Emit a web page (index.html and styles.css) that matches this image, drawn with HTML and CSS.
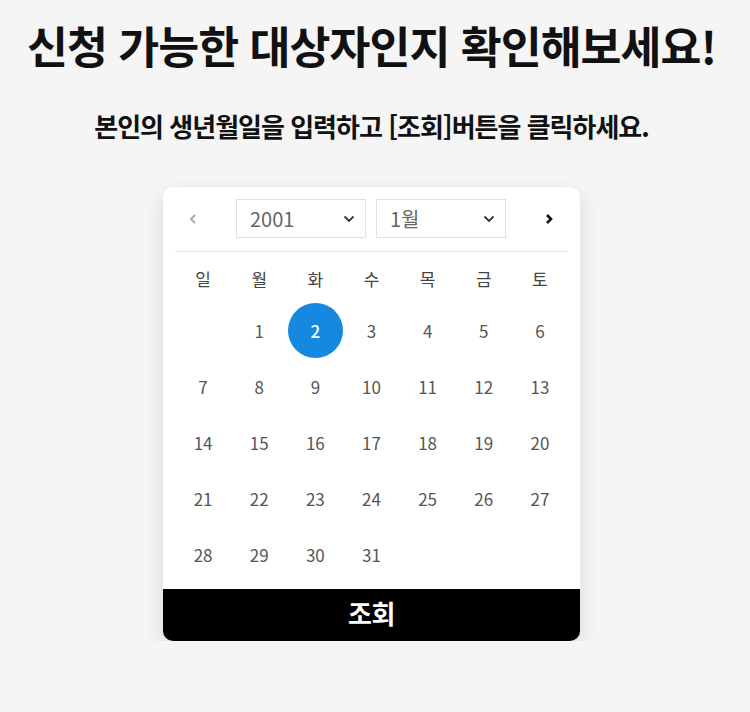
FILE: index.html
```html
<!DOCTYPE html>
<html lang="ko">
<head>
<meta charset="utf-8">
<link rel="stylesheet" href="styles.css">
</head>
<body>
<main class="page">
  <h1 class="title">신청 가능한 대상자인지 확인해보세요!</h1>
  <p class="subtitle">본인의 생년월일을 입력하고 [조회]버튼을 클릭하세요.</p>
  <section class="card">
    <div class="cal-head">
      <button class="nav prev" aria-label="이전 달">
        <svg width="10" height="12" viewBox="0 0 10 12"><path d="M7 2 L3 6 L7 10" fill="none" stroke="#aaa" stroke-width="2"/></svg>
      </button>
      <div class="select">
        <span>2001</span>
        <svg width="12" height="8" viewBox="0 0 12 8"><path d="M1.5 1.5 L6 6 L10.5 1.5" fill="none" stroke="#333" stroke-width="1.8"/></svg>
      </div>
      <div class="select">
        <span>1월</span>
        <svg width="12" height="8" viewBox="0 0 12 8"><path d="M1.5 1.5 L6 6 L10.5 1.5" fill="none" stroke="#333" stroke-width="1.8"/></svg>
      </div>
      <button class="nav next" aria-label="다음 달">
        <svg width="10" height="12" viewBox="0 0 10 12"><path d="M3 2 L7 6 L3 10" fill="none" stroke="#111" stroke-width="2.6"/></svg>
      </button>
    </div>
    <div class="grid weekdays">
      <span>일</span><span>월</span><span>화</span><span>수</span><span>목</span><span>금</span><span>토</span>
    </div>
    <div class="grid days">
      <span></span><span>1</span><span class="sel"><b>2</b></span><span>3</span><span>4</span><span>5</span><span>6</span>
      <span>7</span><span>8</span><span>9</span><span>10</span><span>11</span><span>12</span><span>13</span>
      <span>14</span><span>15</span><span>16</span><span>17</span><span>18</span><span>19</span><span>20</span>
      <span>21</span><span>22</span><span>23</span><span>24</span><span>25</span><span>26</span><span>27</span>
      <span>28</span><span>29</span><span>30</span><span>31</span><span></span><span></span><span></span>
    </div>
    <button class="submit">조회</button>
  </section>
</main>
</body>
</html>
```
FILE: styles.css
```css
* { box-sizing: border-box; }
html, body { margin: 0; padding: 0; }
body {
  background: #f5f5f5;
  font-family: "Noto Sans CJK KR", "Noto Sans", sans-serif;
  color: #111;
  padding-right: 7px;
}
.page {
  display: flex;
  flex-direction: column;
  align-items: center;
  padding-top: 14px;
}
.title {
  margin: 0;
  font-size: 44.5px;
  font-weight: 700;
  letter-spacing: -1px;
  line-height: 62px;
  color: #111;
}
.subtitle {
  margin: 32px 0 0;
  font-size: 26px;
  font-weight: 700;
  letter-spacing: -1px;
  line-height: 36px;
  color: #111;
}
.card {
  margin-top: 43px;
  width: 417px;
  background: #fff;
  border-radius: 10px;
  box-shadow: 0 8px 20px rgba(0,0,0,0.12);
  overflow: hidden;
  display: flex;
  flex-direction: column;
}
.cal-head {
  display: flex;
  align-items: center;
  margin: 12px 12px 0;
  padding-bottom: 13px;
  border-bottom: 1px solid #e2e2e2;
}
.nav {
  border: 0;
  background: none;
  padding: 0;
  height: 39px;
  display: flex;
  align-items: center;
}
.prev { width: 61px; justify-content: flex-start; padding-left: 13px; }
.next { width: 48px; justify-content: flex-end; padding-right: 14px; margin-left: auto; }
.select {
  width: 130px;
  height: 39px;
  border: 1px solid #e0e0e0;
  display: flex;
  align-items: center;
  justify-content: space-between;
  padding: 0 10px 0 13px;
  font-size: 20px;
  color: #666;
}
.select + .select { margin-left: 10px; }
.grid {
  display: grid;
  grid-template-columns: repeat(7, 1fr);
  margin: 0 12px;
}
.grid span {
  display: flex;
  align-items: center;
  justify-content: center;
}
.weekdays {
  height: 51px;
  font-size: 17px;
  color: #444;
  padding-top: 2px;
}
.days {
  grid-auto-rows: 56px;
  font-size: 17px;
  color: #555;
  padding-bottom: 7px;
  margin-top: -1px;
}
.days .sel b {
  width: 55px;
  height: 55px;
  border-radius: 50%;
  background: #1589e0;
  color: #fff;
  font-weight: 500;
  display: flex;
  align-items: center;
  justify-content: center;
}
.submit {
  border: 0;
  height: 52px;
  padding: 0 0 5px;
  background: #000;
  color: #fff;
  font-family: inherit;
  font-size: 26px;
  font-weight: 700;
  letter-spacing: -0.5px;
}
```
